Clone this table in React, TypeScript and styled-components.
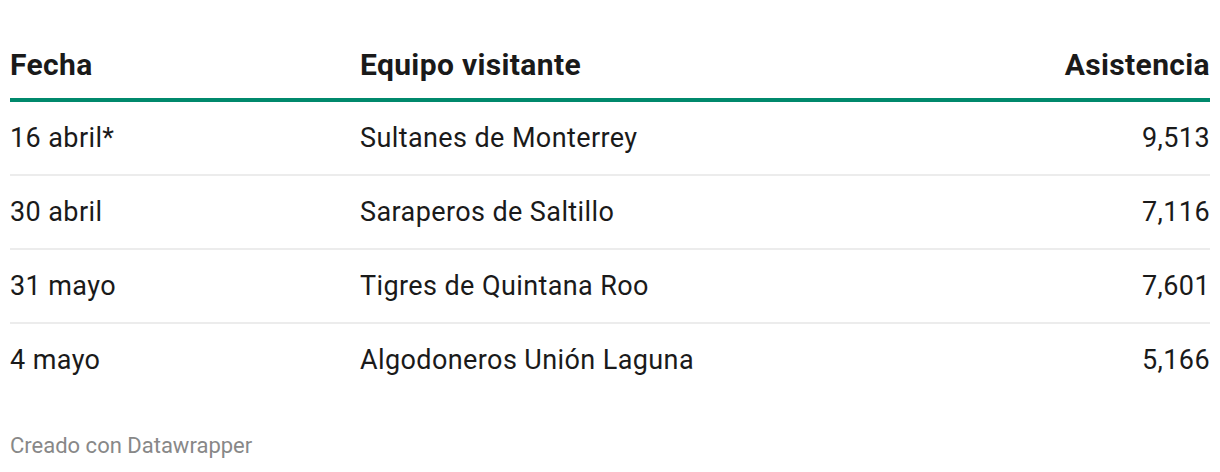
import React from 'react';
import styled, { createGlobalStyle } from 'styled-components';

interface Partido {
  fecha: string;
  equipo: string;
  asistencia: string;
}

const partidos: Partido[] = [
  { fecha: '16 abril*', equipo: 'Sultanes de Monterrey', asistencia: '9,513' },
  { fecha: '30 abril', equipo: 'Saraperos de Saltillo', asistencia: '7,116' },
  { fecha: '31 mayo', equipo: 'Tigres de Quintana Roo', asistencia: '7,601' },
  { fecha: '4 mayo', equipo: 'Algodoneros Unión Laguna', asistencia: '5,166' },
];

const GlobalStyle = createGlobalStyle`
  html, body {
    margin: 0;
    padding: 0;
    background: #ffffff;
  }
  body {
    font-family: Roboto, "Liberation Sans", Arial, sans-serif;
    color: #1a1a1a;
  }
`;

const Wrapper = styled.div`
  padding: 28px 10px 0;
  width: 1200px;
`;

const Table = styled.div`
  display: flex;
  flex-direction: column;
`;

const Row = styled.div<{ head?: boolean; last?: boolean }>`
  display: grid;
  grid-template-columns: 350px 1fr auto;
  align-items: center;
  height: ${({ head }) => (head ? '68px' : '70px')};
  padding-top: 2px;
  border-bottom: ${({ head, last }) =>
    head ? '4px solid #00896c' : last ? 'none' : '2px solid #ececec'};
`;

const Cell = styled.div<{ head?: boolean; right?: boolean }>`
  font-size: ${({ head }) => (head ? '30px' : '27px')};
  font-weight: ${({ head }) => (head ? 700 : 400)};
  letter-spacing: ${({ head }) => (head ? '0.35px' : '0.4px')};
  line-height: 1.3;
  text-align: ${({ right }) => (right ? 'right' : 'left')};
  white-space: nowrap;
`;

const Footer = styled.div`
  margin-top: 36px;
  font-size: 22px;
  line-height: 1.3;
  color: #888888;
`;

export default function App() {
  return (
    <>
      <GlobalStyle />
      <Wrapper>
        <Table>
          <Row head>
            <Cell head>Fecha</Cell>
            <Cell head>Equipo visitante</Cell>
            <Cell head right>
              Asistencia
            </Cell>
          </Row>
          {partidos.map((p, i) => (
            <Row key={p.fecha} last={i === partidos.length - 1}>
              <Cell>{p.fecha}</Cell>
              <Cell>{p.equipo}</Cell>
              <Cell right>{p.asistencia}</Cell>
            </Row>
          ))}
        </Table>
        <Footer>Creado con Datawrapper</Footer>
      </Wrapper>
    </>
  );
}
